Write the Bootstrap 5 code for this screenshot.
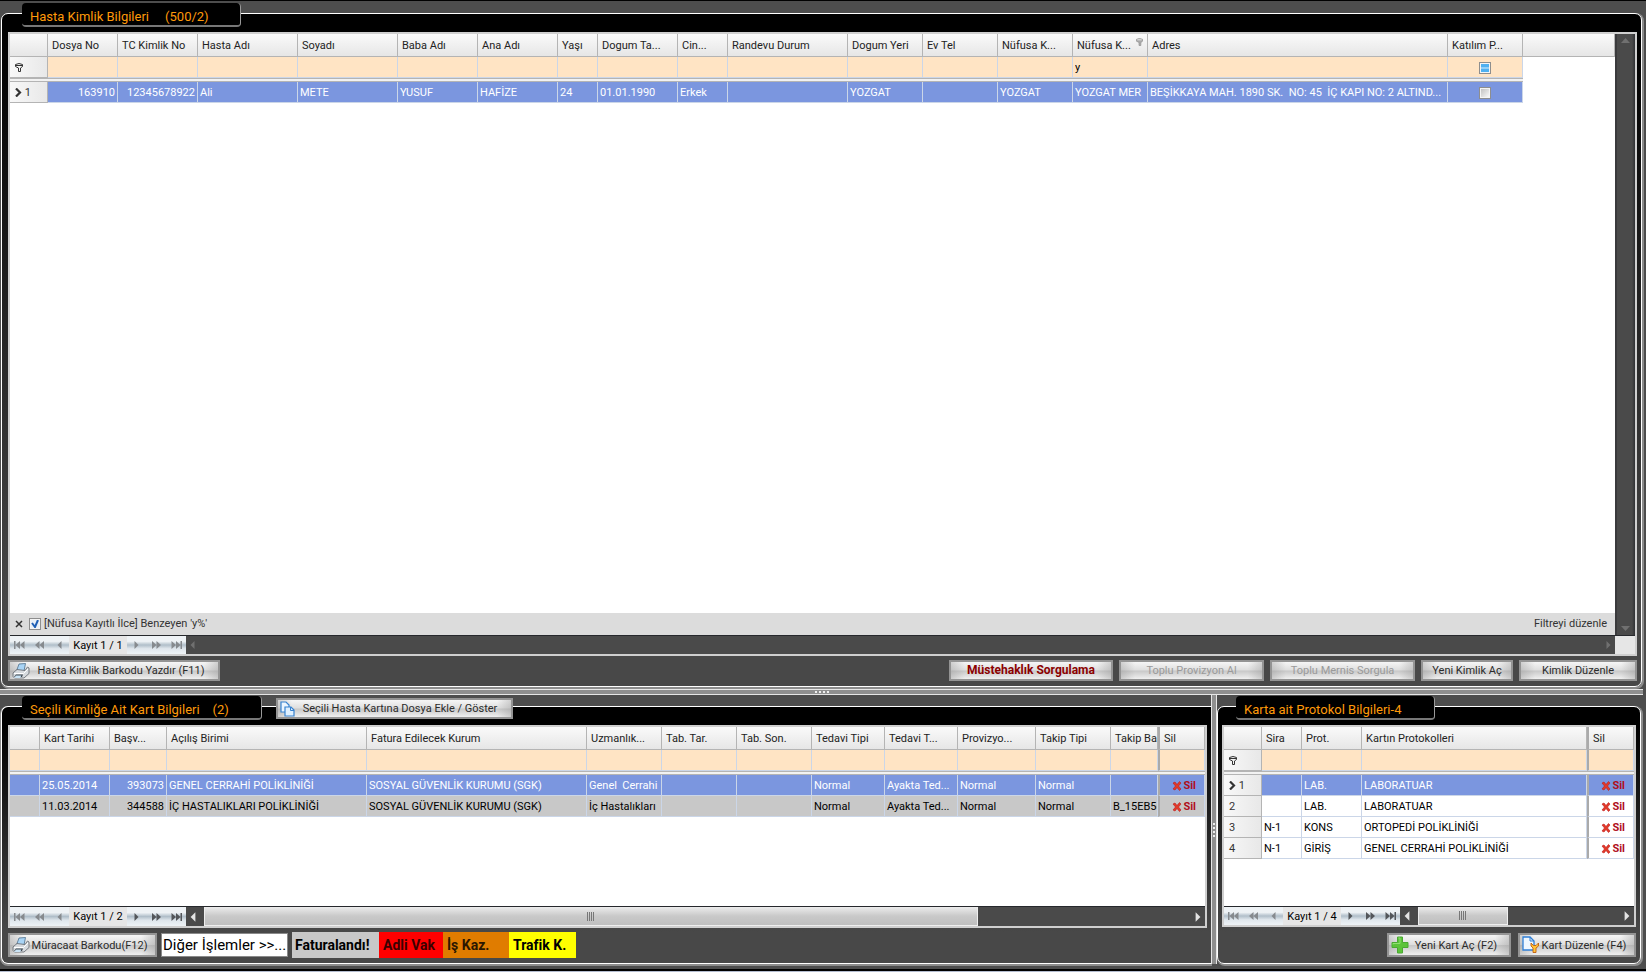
<!DOCTYPE html>
<html lang="tr">
<head>
<meta charset="utf-8">
<meta name="viewport" content="width=device-width, initial-scale=1">
<title>Hasta Kimlik Bilgileri</title>
<link href="https://cdn.jsdelivr.net/npm/bootstrap@5.3.0/dist/css/bootstrap.min.css" rel="stylesheet">
<script src="https://cdn.jsdelivr.net/npm/bootstrap@5.3.0/dist/js/bootstrap.bundle.min.js" defer></script>
<style>
  body { font: 11px/16px Roboto, "Liberation Sans", sans-serif; color: #000; background: #4d4d4d; border-top: 1px solid #000; }
  .pane { border: 1px solid #fff; border-radius: 7px; box-shadow: 1px 1px 0 1px #8c8c8c; background: linear-gradient(#000 20px, #484848 88%); padding: 0 4px 5px 6px; }
  .pane-top { margin: 12px 4px 2px 1px; }
  .pane-left { margin: 11px 0 0 1px; border-right: 0; border-radius: 7px 0 0 7px; min-width: 0; box-shadow: 0 1px 0 1px #8c8c8c; }
  .pane-right { width: 424px; flex: none; margin: 11px 1px 0 0; padding-left: 4px; }
  .caption { height: 24px; margin: -11px 0 5px 14px; padding: 0 8px; background: #000; border-radius: 4px; border-right: 1px solid #999; border-bottom: 2px solid #777; color: #ff9a0a; font-size: 13px; font-weight: 400; line-height: 28px; white-space: pre; }
  .w-cap1 { width: 219px; } .w-cap2 { width: 240px; } .w-cap3 { width: 199px; }
  .attach { margin: -9px 0 0 14px; height: 22px; }
  .lower { height: 269px; }
  .split-h { height: 6px; background: #8f8f8f; border-top: 1px solid #e6e6e6; border-bottom: 1px solid #e6e6e6; margin-right: 3px; }
  .split-v { width: 6px; flex: none; background: #8f8f8f; border-left: 1px solid #e6e6e6; border-right: 1px solid #e6e6e6; z-index: 1; }
  .grip-h { width: 14px; height: 2px; background: repeating-linear-gradient(90deg, #eee 0 2px, transparent 2px 4px); }
  .grip-v { width: 2px; height: 14px; background: repeating-linear-gradient(#eee 0 2px, transparent 2px 4px); }
  .foot-strip { height: 3px; margin-top: 5px; border-top: 2px solid #000; background: #b4bdd0; }

  .sheet { border: 2px solid #cfcfcf; background: #fff; min-height: 0; }
  .grid { width: 100%; table-layout: fixed; border-collapse: separate; border-spacing: 0; }
  .grid th, .grid td { height: 21px; padding: 1px 2px 0; overflow: hidden; white-space: pre; border-right: 1px solid #cbd6e8; border-bottom: 1px solid #cbd6e8; line-height: 16px; }
  .grid thead th { height: 23px; padding: 2px 4px 0; font-weight: 400; color: #222; background: linear-gradient(#fafafa, #e6e6e6); border-color: #b4b4b4; }
  .grid .filters td { background: #ffe4c4; }
  .grid .band td { height: 4px; padding: 0; background: #f2f2f2; border-top: 1px solid #b4b4b4; border-bottom: 1px solid #b4b4b4; border-right: 0; }
  .grid .picked td { background: #7b96df; color: #fff; }
  .grid .billed td { background: #c8c8c8; }
  .grid td.blank, .grid .band td.blank { background: #fff; border: 0; }
  .grid .rowhead { background: linear-gradient(90deg, #f8f8f8, #e8e8e8); border-color: #b4b4b4; font-weight: 400; color: #333; padding-left: 5px; }
  .grid .pin { border-left: 2px solid #aaa; }
  .grid td.pin { padding-right: 8px; }
  .grid input[type=text] { width: 100%; padding: 0; border: 0; background: none; outline: 0; display: block; }
  .tick { appearance: none; display: block; flex: none; width: 12px; height: 12px; margin: 0 auto; border: 1px solid #8e8e8e; background: linear-gradient(135deg, #bbb, #fff); box-shadow: inset 0 0 0 1px #f4f4f4; }
  .tick.mixed { background: linear-gradient(#4fb0f0 40%, #d8f0ff 50%, #4fb0f0 60%); }
  .tick.on { margin: 0 -3px 0 0; background: #e8f0f8 url("data:image/svg+xml,%3Csvg xmlns='http://www.w3.org/2000/svg' viewBox='0 0 10 10'%3E%3Cpath d='M2 4l3 4 3-7' fill='none' stroke='%231f5fb5' stroke-width='2'/%3E%3C/svg%3E"); }
  .del { padding: 0; border: 0; background: none; color: #b0101c; font-weight: 700; font-size: 11px; line-height: 16px; }
  .del svg { margin-right: 1px; }

  .vbar { width: 20px; flex: none; background: linear-gradient(90deg, #3a3a3c 2px, #4a4a4a 2px 85%, #2f3134); }
  .dead { color: #707070; } .live { color: #e4e4e4; }
  .filterbar { height: 22px; background: #dcdcdc; color: #333; padding: 0 8px 0 5px; gap: 6px; }
  .pager { height: 19px; background: #4a4a4a; border-top: 1px solid #26282c; }
  .pager.tall { height: 20px; }
  .nav-strip { width: 176px; flex: none; background: linear-gradient(#eef2f5 0 30%, #b0bec9 50%, #dfe6ec 70%, #eef3f6); }
  .nav-strip .step { width: 20px; padding: 0; border: 0; background: none; color: #53565a; }
  .nav-strip .step svg { display: block; margin: 0 auto; }
  .nav-strip .step:disabled { color: #868a8e; }
  .count { width: 58px; background: #e6e6e6; text-align: center; white-space: nowrap; line-height: 20px; overflow: hidden; }
  .thumb { background: linear-gradient(#ececec, #c9c9c9 50%, #bfbfbf); border: 1px solid #eee; border-width: 0 1px 1px; }
  .thumb-l { width: 774px; } .thumb-r { width: 90px; }
  .ridges { width: 8px; height: 9px; background: repeating-linear-gradient(90deg, #777 0 1px, transparent 1px 2px); }
  .corner { width: 20px; background: #e6e6e6; }

  .keys { gap: 6px; }
  .keys-r { gap: 7px; margin: 6px 0 1px; }
  .key { height: 21px; padding: 0 6px; border: 2px solid #949494; color: #2b2b2b; font-size: 11px; line-height: 17px; white-space: nowrap;
    background: linear-gradient(90deg, rgba(140,140,140,.35), transparent 14px calc(100% - 14px), rgba(140,140,140,.35)), linear-gradient(#f6f6f6, #dedede 48%, #c8c8c8 52%, #f0f0f0); }
  .key:disabled { color: #9a9a9a; }
  .key.tall { height: 24px; }
  .key.warn { color: #8b0000; font-weight: 700; font-size: 12px; }
  .icon-key { padding: 0 2px; display: flex; align-items: center; }
  .icon-key span { flex: 1; padding-right: 4px; text-align: center; }
  .w-a { width: 212px; } .w-b { width: 164px; } .w-c { width: 145px; } .w-d { width: 92px; } .w-e { width: 118px; }
  .w-f { width: 149px; } .w-g { width: 237px; } .w-h { width: 124px; } .w-i { width: 118px; }
  .more { width: 127px; height: 24px; padding: 0 1px; border: 1px solid #8a8a8a; background: #fff; font-size: 15px; }
  .tag { height: 26px; padding: 0 4px; font-weight: 700; font-size: 14px; line-height: 26px; white-space: nowrap; }
  .tag-1 { width: 87px; padding-left: 3px; background: #c8c8c8; } .tag-2 { width: 64px; background: #f00; color: #3c0000; }
  .tag-3 { width: 66px; background: #e07c00; color: #2b1700; } .tag-4 { width: 67px; background: #ff0; }
  svg { display: inline-block; vertical-align: middle; flex: none; }
</style>
</head>
<body class="vh-100 d-flex flex-column overflow-hidden">
<svg class="d-none" aria-hidden="true">
  <symbol id="funnel" viewBox="0 0 8 9"><path d="M.5 1.500Q4 -.500 7.500 1.500V3.500L5.500 5V8.500H3.500V5L.5 3.500ZM.5 2.500H7.500" fill="none" stroke="currentColor"/></symbol>
  <symbol id="funnel-on" viewBox="0 0 8 9"><path d="M.5 1.500Q4 -.500 7.500 1.500V3.500L5.500 5V8.500H3.500V5L.5 3.500Z" fill="#aaa" stroke="#999"/><path d="M1.500 2H6.500" stroke="#eee"/></symbol>
  <symbol id="chev" viewBox="0 0 7 9"><path d="M1 .5L5 4.500L1 8.500" fill="none" stroke="currentColor" stroke-width="2.200"/></symbol>
  <symbol id="cross" viewBox="0 0 10 10"><path d="M1 2L3 1L5 3.500L7.500 .5L9 2L6.500 5L9 8L7.500 9.500L5 6.500L3 9L1 8L3.500 5Z" fill="#e23a28" stroke="#c01818" stroke-width=".6"/></symbol>
  <symbol id="first" viewBox="0 0 11 8"><path d="M0 0H1.500V8H0ZM6 0V8L1.500 4ZM10.500 0V8L6 4Z" fill="currentColor"/></symbol>
  <symbol id="back" viewBox="0 0 11 8"><path d="M5.500 0V8L1 4ZM10 0V8L5.500 4Z" fill="currentColor"/></symbol>
  <symbol id="prev" viewBox="0 0 5 8"><path d="M4.500 0V8L.5 4Z" fill="currentColor"/></symbol>
  <symbol id="next" viewBox="0 0 5 8"><path d="M.5 0V8L4.500 4Z" fill="currentColor"/></symbol>
  <symbol id="fwd" viewBox="0 0 11 8"><path d="M1 0V8L5.500 4ZM5.500 0V8L10 4Z" fill="currentColor"/></symbol>
  <symbol id="last" viewBox="0 0 11 8"><path d="M.5 0V8L5 4ZM5 0V8L9.500 4ZM9.500 0H11V8H9.500Z" fill="currentColor"/></symbol>
  <symbol id="printer" viewBox="0 0 18 16"><path d="M7 1L13.500 .5L12 8H4.500Z" fill="#a9d4f5" stroke="#4d6f8c" stroke-width=".8"/><path d="M1 10L5 6.500L13 7.500L15.500 4L17 5V10.500L12 15H2.500L1 13.500Z" fill="#d6dade" stroke="#5f656b" stroke-width=".8"/><path d="M2 10.500H11.500L16 6" fill="none" stroke="#fff"/><path d="M2 14L4 11.500H11L10 14Z" fill="#39424b"/><path d="M2 15L4 12.500H9.500L8 15Z" fill="#c9e3f5"/></symbol>
  <symbol id="copy" viewBox="0 0 15 16"><path d="M1 1H6L9 4V11H1Z" fill="#eaf5ff" stroke="#3682d0" stroke-width="1.200"/><path d="M5 6H11L14 9V15H5Z" fill="#dff0ff" stroke="#3682d0" stroke-width="1.200"/><path d="M10.500 6V9.500H14" fill="none" stroke="#3682d0"/></symbol>
  <symbol id="plus" viewBox="0 0 18 18"><path d="M6.500 1H11.500V6.500H17V11.500H11.500V17H6.500V11.500H1V6.500H6.500Z" fill="#5cc43a" stroke="#4aa832"/><path d="M7.500 2H9V7.500H2V8.500" fill="none" stroke="#8fe070"/></symbol>
  <symbol id="edit" viewBox="0 0 18 18"><path d="M1 1H8L12 5V14H1Z" fill="#eef7ff" stroke="#2f7fd6" stroke-width="1.300"/><path d="M8 1V5H12" fill="none" stroke="#2f7fd6"/><path d="M9 7V10L11 12V16.500H14V12L16.500 10V7L14 9.500H11.500Z" fill="#ffc53a" stroke="#c05e10" stroke-width=".9"/></symbol>
</svg>

<section class="pane pane-top flex-fill d-flex flex-column">
  <h1 class="caption w-cap1">Hasta Kimlik Bilgileri     (500/2)</h1>
  <div class="sheet flex-fill d-flex flex-column">
    <div class="d-flex flex-fill">
      <div class="flex-fill d-flex flex-column">
        <table class="grid">
          <colgroup><col style="width:38px"><col style="width:70px"><col style="width:80px"><col style="width:100px"><col style="width:100px"><col style="width:80px"><col style="width:80px"><col style="width:40px"><col style="width:80px"><col style="width:50px"><col style="width:120px"><col style="width:75px"><col style="width:75px"><col style="width:75px"><col style="width:75px"><col style="width:300px"><col style="width:75px"><col></colgroup>
          <thead><tr><th></th><th>Dosya No</th><th>TC Kimlik No</th><th>Hasta Adı</th><th>Soyadı</th><th>Baba Adı</th><th>Ana Adı</th><th>Yaşı</th><th>Dogum Ta...</th><th>Cin...</th><th>Randevu Durum</th><th>Dogum Yeri</th><th>Ev Tel</th><th>Nüfusa K...</th><th><span class="d-flex justify-content-between">Nüfusa K...<svg width="7" height="8"><use href="#funnel-on"/></svg></span></th><th>Adres</th><th>Katılım P...</th><th></th></tr></thead>
          <tbody>
            <tr class="filters"><th class="rowhead"><svg width="8" height="9"><use href="#funnel"/></svg></th><td></td><td></td><td></td><td></td><td></td><td></td><td></td><td></td><td></td><td></td><td></td><td></td><td></td><td><input type="text" value="y" aria-label="Nüfusa Kayıtlı İlçe filtresi"></td><td></td><td><input type="checkbox" class="tick mixed" aria-label="Katılım filtresi"></td><td class="blank"></td></tr>
            <tr class="band"><td colspan="17"></td><td class="blank"></td></tr>
            <tr class="picked"><th class="rowhead"><svg width="7" height="9"><use href="#chev"/></svg> 1</th><td class="text-end">163910</td><td class="text-end">12345678922</td><td>Ali</td><td>METE</td><td>YUSUF</td><td>HAFİZE</td><td>24</td><td>01.01.1990</td><td>Erkek</td><td></td><td>YOZGAT</td><td></td><td>YOZGAT</td><td>YOZGAT MER</td><td>BEŞİKKAYA MAH. 1890 SK.  NO: 45  İÇ KAPI NO: 2 ALTIND...</td><td><input type="checkbox" class="tick" aria-label="Katılım payı"></td><td class="blank"></td></tr>
          </tbody>
        </table>
        <div class="filterbar d-flex align-items-center mt-auto">
          <svg width="8" height="8" viewBox="0 0 8 8" role="button" aria-label="Filtreyi kapat"><path d="M1 1L7 7M7 1L1 7" stroke="#333" stroke-width="1.500"/></svg>
          <input type="checkbox" class="tick on" id="flt" checked>
          <label for="flt">[Nüfusa Kayıtlı İlce] Benzeyen 'y%'</label>
          <a href="#" class="ms-auto text-decoration-none text-reset">Filtreyi düzenle</a>
        </div>
      </div>
      <div class="vbar dead d-flex flex-column justify-content-between align-items-center py-1"><svg width="9" height="5" viewBox="0 0 9 5"><path d="M0 5L4.500 0L9 5Z" fill="currentColor"/></svg><svg width="9" height="5" viewBox="0 0 9 5"><path d="M0 0L4.500 5L9 0Z" fill="currentColor"/></svg></div>
    </div>
    <div class="pager d-flex">
      <div class="nav-strip d-flex align-items-stretch">
        <button class="step" disabled aria-label="İlk"><svg width="11" height="8"><use href="#first"/></svg></button><button class="step" disabled aria-label="Önceki sayfa"><svg width="11" height="8"><use href="#back"/></svg></button><button class="step" disabled aria-label="Önceki"><svg width="5" height="8"><use href="#prev"/></svg></button>
        <span class="count">Kayıt 1 / 1</span>
        <button class="step" disabled aria-label="Sonraki"><svg width="5" height="8"><use href="#next"/></svg></button><button class="step" disabled aria-label="Sonraki sayfa"><svg width="11" height="8"><use href="#fwd"/></svg></button><button class="step" disabled aria-label="Son"><svg width="11" height="8"><use href="#last"/></svg></button>
      </div>
      <div class="flex-fill d-flex align-items-center justify-content-between px-1 dead"><svg width="5" height="8"><use href="#prev"/></svg><svg width="5" height="8"><use href="#next"/></svg></div>
      <div class="corner"></div>
    </div>
  </div>
  <div class="d-flex mt-1">
    <button class="key icon-key w-a"><svg width="18" height="16"><use href="#printer"/></svg><span>Hasta Kimlik Barkodu Yazdır (F11)</span></button>
    <div class="keys ms-auto d-flex">
      <button class="key warn w-b">Müstehaklık Sorgulama</button>
      <button class="key w-c" disabled>Toplu Provizyon Al</button>
      <button class="key w-c" disabled>Toplu Mernis Sorgula</button>
      <button class="key w-d">Yeni Kimlik Aç</button>
      <button class="key w-e">Kimlik Düzenle</button>
    </div>
  </div>
</section>

<div class="split-h d-flex justify-content-center align-items-center"><div class="grip-h"></div></div>

<div class="lower d-flex me-1">
  <section class="pane pane-left flex-fill d-flex flex-column">
    <div class="d-flex">
      <h2 class="caption w-cap2">Seçili Kimliğe Ait Kart Bilgileri    (2)</h2>
      <div class="attach"><button class="key icon-key w-g"><svg width="15" height="16"><use href="#copy"/></svg><span>Seçili Hasta Kartına Dosya Ekle / Göster</span></button></div>
    </div>
    <div class="sheet flex-fill d-flex flex-column">
      <table class="grid">
        <colgroup><col style="width:30px"><col style="width:70px"><col style="width:57px"><col style="width:200px"><col style="width:220px"><col style="width:75px"><col style="width:75px"><col style="width:75px"><col style="width:73px"><col style="width:73px"><col style="width:78px"><col style="width:75px"><col><col style="width:47px"></colgroup>
        <thead><tr><th></th><th>Kart Tarihi</th><th>Başv...</th><th>Açılış Birimi</th><th>Fatura Edilecek Kurum</th><th>Uzmanlık...</th><th>Tab. Tar.</th><th>Tab. Son.</th><th>Tedavi Tipi</th><th>Tedavi T...</th><th>Provizyo...</th><th>Takip Tipi</th><th>Takip Ba.</th><th class="pin">Sil</th></tr></thead>
        <tbody>
          <tr class="filters"><td></td><td></td><td></td><td></td><td></td><td></td><td></td><td></td><td></td><td></td><td></td><td></td><td></td><td class="pin"></td></tr>
          <tr class="band"><td colspan="14"></td></tr>
          <tr class="picked"><td></td><td>25.05.2014</td><td class="text-end">393073</td><td>GENEL CERRAHİ POLİKLİNİĞİ</td><td>SOSYAL GÜVENLİK KURUMU (SGK)</td><td>Genel  Cerrahi</td><td></td><td></td><td>Normal</td><td>Ayakta Ted...</td><td>Normal</td><td>Normal</td><td></td><td class="pin text-end"><button class="del"><svg width="10" height="10"><use href="#cross"/></svg>Sil</button></td></tr>
          <tr class="billed"><td></td><td>11.03.2014</td><td class="text-end">344588</td><td>İÇ HASTALIKLARI POLİKLİNİĞİ</td><td>SOSYAL GÜVENLİK KURUMU (SGK)</td><td>İç Hastalıkları</td><td></td><td></td><td>Normal</td><td>Ayakta Ted...</td><td>Normal</td><td>Normal</td><td>B_15EB5(</td><td class="pin text-end"><button class="del"><svg width="10" height="10"><use href="#cross"/></svg>Sil</button></td></tr>
        </tbody>
      </table>
      <div class="pager tall d-flex mt-auto">
        <div class="nav-strip d-flex align-items-stretch">
          <button class="step" disabled aria-label="İlk"><svg width="11" height="8"><use href="#first"/></svg></button><button class="step" disabled aria-label="Önceki sayfa"><svg width="11" height="8"><use href="#back"/></svg></button><button class="step" disabled aria-label="Önceki"><svg width="5" height="8"><use href="#prev"/></svg></button>
          <span class="count">Kayıt 1 / 2</span>
          <button class="step" aria-label="Sonraki"><svg width="5" height="8"><use href="#next"/></svg></button><button class="step" aria-label="Sonraki sayfa"><svg width="11" height="8"><use href="#fwd"/></svg></button><button class="step" aria-label="Son"><svg width="11" height="8"><use href="#last"/></svg></button>
        </div>
        <div class="flex-fill d-flex align-items-stretch px-1 live"><svg class="my-auto me-2" width="6" height="10"><use href="#prev"/></svg><div class="thumb thumb-l d-flex align-items-center justify-content-center"><div class="ridges"></div></div><svg class="my-auto ms-auto" width="6" height="10"><use href="#next"/></svg></div>
      </div>
    </div>
    <div class="d-flex align-items-center mt-1">
      <button class="key tall icon-key w-f"><svg width="18" height="16"><use href="#printer"/></svg><span>Müracaat Barkodu(F12)</span></button>
      <input class="more mx-1" type="text" value="Diğer İşlemler &gt;&gt;..." aria-label="Diğer İşlemler">
      <span class="tag tag-1">Faturalandı!</span><span class="tag tag-2">Adli Vak</span><span class="tag tag-3">İş Kaz.</span><span class="tag tag-4">Trafik K.</span>
    </div>
  </section>

  <div class="split-v d-flex flex-column justify-content-center"><div class="grip-v mx-auto"></div></div>

  <section class="pane pane-right d-flex flex-column">
    <h2 class="caption w-cap3">Karta ait Protokol Bilgileri-4</h2>
    <div class="sheet flex-fill d-flex flex-column">
      <table class="grid">
        <colgroup><col style="width:38px"><col style="width:40px"><col style="width:60px"><col><col style="width:47px"></colgroup>
        <thead><tr><th></th><th>Sira</th><th>Prot.</th><th>Kartın Protokolleri</th><th class="pin">Sil</th></tr></thead>
        <tbody>
          <tr class="filters"><th class="rowhead"><svg width="8" height="9"><use href="#funnel"/></svg></th><td></td><td></td><td></td><td class="pin"></td></tr>
          <tr class="band"><td colspan="5"></td></tr>
          <tr class="picked"><th class="rowhead"><svg width="7" height="9"><use href="#chev"/></svg> 1</th><td></td><td>LAB.</td><td>LABORATUAR</td><td class="pin text-end"><button class="del"><svg width="10" height="10"><use href="#cross"/></svg>Sil</button></td></tr>
          <tr><th class="rowhead">2</th><td></td><td>LAB.</td><td>LABORATUAR</td><td class="pin text-end"><button class="del"><svg width="10" height="10"><use href="#cross"/></svg>Sil</button></td></tr>
          <tr><th class="rowhead">3</th><td>N-1</td><td>KONS</td><td>ORTOPEDİ POLİKLİNİĞİ</td><td class="pin text-end"><button class="del"><svg width="10" height="10"><use href="#cross"/></svg>Sil</button></td></tr>
          <tr><th class="rowhead">4</th><td>N-1</td><td>GİRİŞ</td><td>GENEL CERRAHİ POLİKLİNİĞİ</td><td class="pin text-end"><button class="del"><svg width="10" height="10"><use href="#cross"/></svg>Sil</button></td></tr>
        </tbody>
      </table>
      <div class="pager d-flex mt-auto">
        <div class="nav-strip d-flex align-items-stretch">
          <button class="step" disabled aria-label="İlk"><svg width="11" height="8"><use href="#first"/></svg></button><button class="step" disabled aria-label="Önceki sayfa"><svg width="11" height="8"><use href="#back"/></svg></button><button class="step" disabled aria-label="Önceki"><svg width="5" height="8"><use href="#prev"/></svg></button>
          <span class="count">Kayıt 1 / 4</span>
          <button class="step" aria-label="Sonraki"><svg width="5" height="8"><use href="#next"/></svg></button><button class="step" aria-label="Sonraki sayfa"><svg width="11" height="8"><use href="#fwd"/></svg></button><button class="step" aria-label="Son"><svg width="11" height="8"><use href="#last"/></svg></button>
        </div>
        <div class="flex-fill d-flex align-items-stretch px-1 live"><svg class="my-auto me-2" width="6" height="10"><use href="#prev"/></svg><div class="thumb thumb-r d-flex align-items-center justify-content-center"><div class="ridges"></div></div><svg class="my-auto ms-auto" width="6" height="10"><use href="#next"/></svg></div>
      </div>
    </div>
    <div class="keys-r d-flex justify-content-end">
      <button class="key tall icon-key w-h"><svg width="18" height="18"><use href="#plus"/></svg><span>Yeni Kart Aç (F2)</span></button>
      <button class="key tall icon-key w-i"><svg width="18" height="18"><use href="#edit"/></svg><span>Kart Düzenle (F4)</span></button>
    </div>
  </section>
</div>
<div class="foot-strip"></div>
</body>
</html>
